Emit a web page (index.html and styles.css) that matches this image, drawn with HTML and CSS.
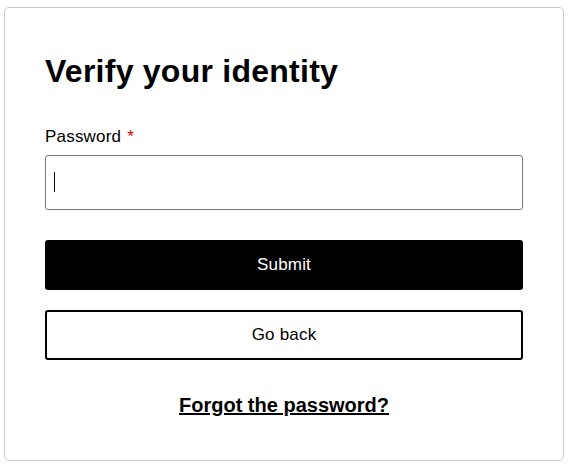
FILE: index.html
```html
<!DOCTYPE html>
<html lang="en">
<head>
<meta charset="utf-8">
<title>Verify your identity</title>
<link rel="stylesheet" href="styles.css">
</head>
<body>
<main class="card">
  <h1 class="title">Verify your identity</h1>
  <form class="form">
    <label class="label" for="pw">Password <span class="req">*</span></label>
    <div class="field">
      <input class="input" id="pw" type="password">
    </div>
    <button type="button" class="btn btn-primary">Submit</button>
    <button type="button" class="btn btn-secondary">Go back</button>
  </form>
  <a class="forgot" href="#">Forgot the password?</a>
</main>
</body>
</html>
```

FILE: styles.css
```css
* { box-sizing: border-box; }
html, body { margin: 0; padding: 0; background: #fff; }
body {
  font-family: "Liberation Sans", Arial, sans-serif;
  color: #000;
  padding: 7px 4px 5px 4px;
}
.card {
  border: 1px solid #c9c9d3;
  border-radius: 5px;
  padding: 45px 40px 43px 40px;
  display: flex;
  flex-direction: column;
  height: 454px;
}
.title {
  margin: 0;
  font-size: 32px;
  line-height: 36px;
  font-weight: 700;
  letter-spacing: 0.25px;
}
.form {
  display: flex;
  flex-direction: column;
  margin-top: 38px;
}
.label {
  font-size: 17px;
  line-height: 20px;
  letter-spacing: 0.2px;
}
.req {
  color: #e00000;
  margin-left: 1px;
}
.field {
  position: relative;
  margin-top: 8px;
}
.field::after {
  content: "";
  position: absolute;
  left: 9px;
  top: 17px;
  width: 1px;
  height: 20px;
  background: #000;
}
.input {
  display: block;
  width: 100%;
  height: 55px;
  border: 1px solid #767676;
  border-radius: 3px;
  background: #fff;
  outline: none;
  font: inherit;
  font-size: 17px;
  padding: 0 10px;
  caret-color: transparent;
}
.btn {
  display: block;
  width: 100%;
  height: 50px;
  border-radius: 3px;
  font-family: "Liberation Sans", Arial, sans-serif;
  font-size: 17px;
  letter-spacing: 0.2px;
  cursor: pointer;
}
.btn-primary {
  margin-top: 30px;
  background: #000;
  color: #fff;
  border: none;
}
.btn-secondary {
  margin-top: 20px;
  background: #fff;
  color: #000;
  border: 2px solid #000;
}
.forgot {
  align-self: center;
  margin-top: 34px;
  font-size: 20px;
  line-height: 23px;
  font-weight: 700;
  color: #000;
  text-decoration: underline;
}
```
